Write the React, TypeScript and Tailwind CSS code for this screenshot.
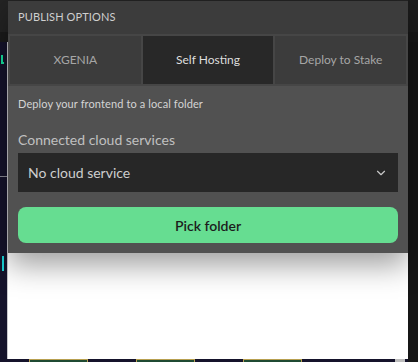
import React from "react";
import { ChevronDown } from "lucide-react";

export default function App() {
  const font = { fontFamily: "Lato, 'Noto Sans', sans-serif" };
  return (
    <div className="relative w-[418px] h-[362px] overflow-hidden bg-[#161616]" style={font}>
      {/* background app */}
      <div className="flex flex-col h-full">
        <div className="flex h-[32px]">
          <div className="w-[408px] bg-[#232323]" />
          <div className="flex-1 bg-[#1c1c1c]" />
        </div>
        <div className="flex h-[10px]">
          <div className="w-[408px] bg-[#1b1b1b]" />
          <div className="flex-1 bg-[#181818]" />
        </div>
        <div className="flex flex-1">
          <div className="w-[408px] flex flex-col">
            <div className="flex flex-1">
              <div className="w-[7px] bg-[#15132b] flex flex-col">
                <div className="mt-[13px] h-[9px] w-[3px] ml-[1px] border-l-2 border-b-2 border-[#14e0a0]" />
                <div className="mt-[112px] h-px w-full bg-[#8a8a95]" />
                <div className="mt-[79px] ml-[2px] h-[15px] w-[2px] bg-[#19d4d8]" />
              </div>
              <div className="w-px bg-[#c8c8cc]" />
              <div className="flex-1 bg-white" />
            </div>
            <div className="h-[3px] bg-[#15132b] flex gap-[48px] pl-[29px]">
              <div className="w-[59px] h-full border-t border-x border-[#b8a050] bg-[#1f4a32]" />
              <div className="w-[59px] h-full border-t border-x border-[#b8a050] bg-[#1f4a32]" />
              <div className="w-[59px] h-full border-t border-x border-[#b8a050] bg-[#1f4a32]" />
            </div>
          </div>
          <div className="flex-1 bg-[#161616] flex flex-col justify-end">
            <div className="h-[3px] w-[10px] bg-[#bdbdbd] -ml-[13px]" />
          </div>
        </div>
      </div>

      {/* dialog */}
      <div className="absolute left-[8px] top-[1px] w-[400px] bg-[#515151] shadow-[0_12px_28px_rgba(0,0,0,0.38)]">
        <div className="h-[33px] bg-[#3c3c3c] flex items-center px-[10px] text-[11px] text-[#cfcfcf] tracking-[0.01em]">
          PUBLISH OPTIONS
        </div>
        <div className="h-[52px] bg-[#464646] p-[2px] flex gap-[2px]">
          <div className="flex-1 bg-[#3c3c3c] flex items-center justify-center text-[12px] text-[#a6a6a6]">XGENIA</div>
          <div className="flex-1 bg-[#282828] flex items-center justify-center text-[12px] text-[#dedede]">Self Hosting</div>
          <div className="flex-1 bg-[#3c3c3c] flex items-center justify-center text-[12px] text-[#a6a6a6]">Deploy to Stake</div>
        </div>
        <div className="px-[10px] pt-[11px] pb-[10px] flex flex-col">
          <div className="h-[14px] leading-[14px] text-[11px] tracking-[0.01em] text-[#d4d4d4]">Deploy your frontend to a local folder</div>
          <div className="mt-[19px] h-[20px] leading-[20px] text-[14px] text-[#c0c0c0]">Connected cloud services</div>
          <div className="mt-[3px] h-[39px] bg-[#272727] flex items-center justify-between pl-[10px] pr-[10px]">
            <span className="text-[14px] text-[#cecece]">No cloud service</span>
            <ChevronDown size={14} strokeWidth={2} className="text-[#c8c8c8]" />
          </div>
          <div className="mt-[15px] h-[36px] rounded-[8px] bg-[#66dd91] flex items-center justify-center text-[14px] font-semibold text-[#1c1c1c]">
            Pick folder
          </div>
        </div>
      </div>
    </div>
  );
}
